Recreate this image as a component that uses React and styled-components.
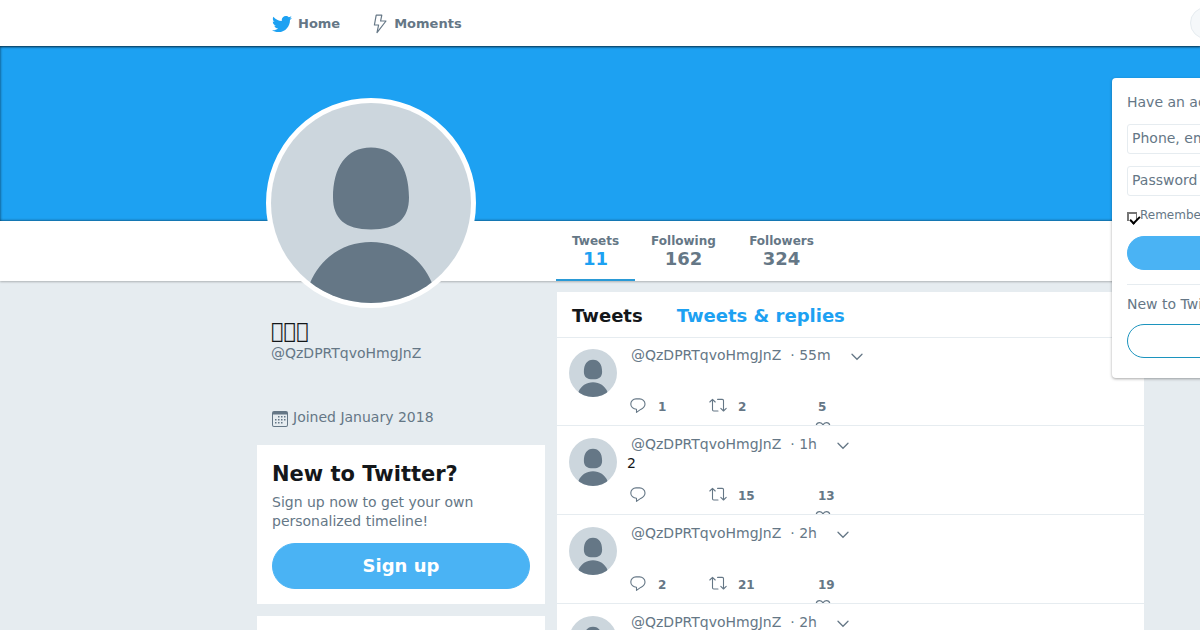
import styled, { createGlobalStyle } from 'styled-components';
import { FaTwitter } from 'react-icons/fa';

const GlobalStyle = createGlobalStyle`
	* {
		box-sizing: border-box;
	}

	body {
		margin: 0;
		background: #e6ecf0;
		color: #14171a;
		font-family: 'DejaVu Sans', Verdana, sans-serif;
		font-size: 14px;
		line-height: 20px;
	}

	h1,
	h2,
	p,
	ul {
		margin: 0;
		padding: 0;
	}

	ul {
		list-style: none;
	}

	a {
		color: inherit;
		text-decoration: none;
	}

	button,
	input {
		font-family: inherit;
	}
`;

// the display name is made of glyphs that the font does not have
const user = {
	name: '\uE83A\uE83B\uE83C',
	login: '@QzDPRTqvoHmgJnZ',
	joined: 'Joined January 2018',
};

const stats = [
	{ label: 'Tweets', value: 11, width: 79, active: true },
	{ label: 'Following', value: 162, width: 97 },
	{ label: 'Followers', value: 324, width: 99 },
];

const tweets = [
	{ id: 1, time: '55m', text: '', replies: 1, retweets: 2, likes: 5 },
	{ id: 2, time: '1h', text: '2', replies: null, retweets: 15, likes: 13 },
	{ id: 3, time: '2h', text: '', replies: 2, retweets: 21, likes: 19 },
	{ id: 4, time: '2h', text: '', replies: null, retweets: null, likes: null },
];

const BoltIcon = () => (
	<svg width="16" height="20" viewBox="0 0 16 20" fill="none" stroke="#657786" strokeWidth="1.2" strokeLinejoin="round">
		<path d="M4.200 1.200h5.600L8.600 7H14L5 18.600 6.600 11H2.400z" />
	</svg>
);

const CalendarIcon = () => (
	<svg width="16" height="16" viewBox="0 0 16 16" fill="#657786">
		<path
			fillRule="evenodd"
			d="M2 0h12a2 2 0 0 1 2 2v12a2 2 0 0 1-2 2H2a2 2 0 0 1-2-2V2a2 2 0 0 1 2-2zM1 3.5V14a1 1 0 0 0 1 1h12a1 1 0 0 0 1-1V3.5z"
		/>
		<path d="M6 5h1.5v1.5H6zM9 5h1.5v1.5H9zM12 5h1.5v1.5H12zM3 8h1.5v1.5H3zM6 8h1.5v1.5H6zM9 8h1.5v1.5H9zM12 8h1.5v1.5H12zM3 11h1.5v1.5H3zM6 11h1.5v1.5H6zM9 11h1.5v1.5H9z" />
	</svg>
);

const ReplyIcon = () => (
	<svg width="16" height="16" viewBox="0 0 16 16" fill="none" stroke="#657786" strokeWidth="1.1" strokeLinejoin="round">
		<path d="M6 .9h3.600a5.400 5 0 0 1 5.400 5c0 2.600-1.700 4.100-4.300 5.500l-4.200 3v-3.200C3.200 11.200.8 9 .8 5.900A5.200 5 0 0 1 6 .9z" />
	</svg>
);

const RetweetIcon = () => (
	<svg width="18" height="16" viewBox="0 0 18 16" fill="none" stroke="#657786" strokeWidth="1.1" strokeLinejoin="round" strokeLinecap="round">
		<path d="M.8 4 3.500 1.400 6.200 4M3.500 1.400v10.400a1.200 1.200 0 0 0 1.200 1.200H9M17.200 10.400 14.500 13l-2.700-2.600M14.500 13V2.600a1.200 1.200 0 0 0-1.200-1.200H8.600" />
	</svg>
);

const HeartIcon = () => (
	<svg width="16" height="16" viewBox="0 0 16 16" fill="none" stroke="#657786" strokeWidth="1.2">
		<path d="M8 14.500C5 12.500 1.200 9 1.200 5.300 1.200 3 2.800 1.600 4.600 1.600 6.200 1.600 7.400 2.600 8 4c.6-1.400 1.800-2.400 3.400-2.400 1.800 0 3.400 1.400 3.400 3.700 0 3.700-3.800 7.200-6.800 9.200z" />
	</svg>
);

const CaretIcon = () => (
	<svg width="12" height="8" viewBox="0 0 12 8" fill="none" stroke="#657786" strokeWidth="1.3" strokeLinecap="round">
		<path d="M1 1.300 6 6.300l5-5" />
	</svg>
);

const AvatarContainer = ({ className }) => (
	<a className={className} href="#profile" aria-label={user.login}>
		<svg viewBox="0 0 200 200">
			<path
				fill="#657786"
				d="M100 44.500c25 0 38 20 38 50 0 21-12 32-38 32s-38-11-38-32c0-30 13-50 38-50zM100 139c27 0 50 15 61 41v20H39v-20c11-26 34-41 61-41z"
			/>
		</svg>
	</a>
);

const Avatar = styled(AvatarContainer)`
	display: block;
	flex: none;
	width: ${({ size }) => size}px;
	height: ${({ size }) => size}px;
	border: ${({ $border = 0 }) => $border}px solid #fff;
	border-radius: 50%;
	background: #fff;

	svg {
		display: block;
		width: 100%;
		border-radius: 50%;
		background: #ccd6dd;
	}
`;

const Page = styled.div`
	position: relative;
	overflow: hidden;
	min-height: 100vh;
`;

const TopBar = styled.header`
	position: relative;
	display: flex;
	align-items: center;
	height: 46px;
	padding-left: 272px;
	background: #fff;
	box-shadow: 0 1px 2px rgba(0, 0, 0, 0.5);
	color: #657786;
	font-size: 13px;
	font-weight: bold;
`;

const TopNav = styled.nav`
	display: flex;
	gap: 32px;
	padding-top: 1px;

	a {
		display: flex;
		align-items: center;
		gap: 6px;
	}
`;

const Search = styled.input`
	width: 220px;
	height: 32px;
	margin: 0 -210px 0 auto;
	padding: 0 16px;
	border: 1px solid #e6ecf0;
	border-radius: 16px;
	background: #f5f8fa;
	font-size: 12px;
`;

const Banner = styled.div`
	height: 175px;
	margin-right: -10px;
	background: #1da1f2;
	box-shadow: inset 0 0 3px rgba(0, 0, 0, 0.7);
`;

const ProfileBar = styled.div`
	position: relative;
	display: flex;
	height: 60px;
	padding-left: 556px;
	background: #fff;
	box-shadow: 0 1px 2px rgba(0, 0, 0, 0.25);
`;

const AvatarHolder = styled.div`
	position: absolute;
	bottom: -27px;
	left: 266px;
`;

const Stats = styled.ul`
	display: flex;
`;

const Stat = styled.li`
	width: ${({ $width }) => $width}px;
	border-bottom: 2px solid ${({ $active }) => ($active ? '#2a9ad6' : 'transparent')};
	color: #657786;
	font-weight: bold;
	text-align: center;

	a {
		display: flex;
		flex-direction: column;
		padding-top: 12px;
		font-size: 12px;
		line-height: 16px;
	}

	strong {
		color: ${({ $active }) => ($active ? '#1da1f2' : 'inherit')};
		font-size: 18px;
		line-height: 20px;
	}
`;

const Content = styled.main`
	display: grid;
	grid-template-columns: 288px 1fr;
	gap: 12px;
	padding: 11px 56px 0 257px;
`;

const Sidebar = styled.aside`
	display: flex;
	flex-direction: column;
	gap: 12px;
`;

const Profile = styled.section`
	height: 141px;
	padding: 27px 14px 0;
	color: #657786;

	h1 {
		color: #14171a;
		font-size: 21px;
		font-weight: normal;
		line-height: 24px;
	}
`;

const Joined = styled.p`
	display: flex;
	align-items: center;
	gap: 5px;
	padding-left: 1px;
	margin-top: 44px;

	svg {
		margin-top: 3px;
	}
`;

const Card = styled.section`
	min-height: ${({ $minHeight = 0 }) => $minHeight}px;
	padding: 15px;
	background: #fff;

	h2 {
		font-size: 21px;
		line-height: 28px;
	}

	p {
		margin: 5px 0 12px;
		color: #657786;
		line-height: 19px;
	}
`;

const Button = styled.button`
	display: block;
	width: 100%;
	height: ${({ $height }) => $height}px;
	padding: 0 0 2px;
	border: 1px solid ${({ $outline }) => ($outline ? '#1c94be' : '#4ab3f4')};
	border-radius: 100px;
	background: ${({ $outline }) => ($outline ? '#fff' : '#4ab3f4')};
	color: ${({ $outline }) => ($outline ? '#1da1f2' : '#fff')};
	font-size: ${({ $fontSize = 14 }) => $fontSize}px;
	font-weight: bold;
`;

const Timeline = styled.section`
	background: #fff;
`;

const Tabs = styled.nav`
	position: relative;
	display: flex;
	align-items: center;
	gap: 34px;
	height: 45px;
	padding: 2px 15px 0;
	box-shadow: 0 1px #e6ecf0;
	font-size: 18px;
	font-weight: bold;

	a {
		color: #1da1f2;
	}
`;

const TweetContainer = ({ className, tweet }) => (
	<li className={className}>
		<Avatar size={48} />
		<div className="body">
			<div className="meta">
				<a href="#profile">{user.login}</a>
				<a className="time" href="#tweet">
					· {tweet.time}
				</a>
				<button aria-label="More">
					<CaretIcon />
				</button>
			</div>
			<p>{tweet.text}</p>
			<div className="actions">
				<button aria-label="Reply">
					<ReplyIcon />
					{tweet.replies}
				</button>
				<button aria-label="Retweet">
					<RetweetIcon />
					{tweet.retweets}
				</button>
				<button className="like" aria-label="Like">
					<span>{tweet.likes}</span>
					<HeartIcon />
				</button>
			</div>
		</div>
	</li>
);

const Tweet = styled(TweetContainer)`
	display: flex;
	gap: 10px;
	height: 89px;
	padding: 11px 12px 0;
	border-bottom: 1px solid #e6ecf0;
	overflow: hidden;

	${Avatar} {
		margin-top: 1px;
	}

	.meta {
		display: flex;
		align-items: center;
		height: 14px;
		padding-left: 4px;
		color: #657786;
	}

	.meta button {
		margin-top: 3px;
	}

	.time {
		margin: 0 20px 0 9px;
	}

	button {
		display: flex;
		padding: 0;
		border: none;
		background: none;
		color: #657786;
		font-size: 12px;
		font-weight: bold;
		line-height: 18px;
	}

	p {
		height: 20px;
		margin-top: 2px;
	}

	.actions {
		display: grid;
		grid-template-columns: 79px 107px 40px;
		align-items: start;
		margin-top: 14px;
		padding-left: 3px;
	}

	.actions button {
		gap: 11px;
	}

	.actions button:first-child {
		gap: 12px;
	}

	.actions .like {
		flex-direction: column;
		align-items: flex-start;
		gap: 5px;
		padding-left: 2px;
	}

	.like span {
		min-height: 18px;
	}

	.like svg {
		margin-left: -3px;
	}
`;

const LoginPanel = styled.form`
	position: absolute;
	top: 78px;
	right: -202px;
	width: 290px;
	padding: 14px 15px 20px;
	border-radius: 4px;
	background: #fff;
	box-shadow: 0 1px 3px rgba(0, 0, 0, 0.35);
	color: #657786;

	hr {
		margin: 14px 0 9px;
		border: none;
		border-top: 1px solid #e6ecf0;
	}

	p + button {
		margin-top: 10px;
	}
`;

const Field = styled.input`
	display: block;
	width: 100%;
	height: 30px;
	margin: 12px 0;
	padding: 0 4px 2px;
	border: 1px solid #e6ecf0;
	border-radius: 3px;
	font-size: 14px;

	&::placeholder {
		color: #657786;
	}
`;

const Remember = styled.label`
	display: flex;
	align-items: center;
	gap: 3px;
	height: 16px;
	margin: -1px 0 13px;
	font-size: 12px;

	input {
		flex: none;
		appearance: none;
		width: 10px;
		height: 9px;
		margin: 3px 0 0;
		border: solid #767676;
		border-width: 2px 1px 0 2px;
	}

	input:checked::after {
		content: '';
		display: block;
		width: 4px;
		height: 8px;
		margin-left: 3px;
		border: solid #000;
		border-width: 0 2px 2px 0;
		transform: rotate(45deg);
	}
`;

const App = () => {
	return (
		<Page>
			<GlobalStyle />
			<TopBar>
				<TopNav>
					<a href="#home">
						<FaTwitter size={20} color="#1da1f2" />
						Home
					</a>
					<a href="#moments">
						<BoltIcon />
						Moments
					</a>
				</TopNav>
				<Search aria-label="Search Twitter" />
			</TopBar>
			<Banner />
			<ProfileBar>
				<Stats>
					{stats.map(({ label, value, width, active }) => (
						<Stat key={label} $width={width} $active={active}>
							<a href={`#${label}`}>
								{label}
								<strong>{value}</strong>
							</a>
						</Stat>
					))}
				</Stats>
				<AvatarHolder>
					<Avatar size={210} $border={5} />
				</AvatarHolder>
			</ProfileBar>
			<Content>
				<Sidebar>
					<Profile>
						<h1>{user.name}</h1>
						<a href="#profile">{user.login}</a>
						<Joined>
							<CalendarIcon />
							{user.joined}
						</Joined>
					</Profile>
					<Card>
						<h2>New to Twitter?</h2>
						<p>Sign up now to get your own personalized timeline!</p>
						<Button $height={46} $fontSize={18}>
							Sign up
						</Button>
					</Card>
					<Card $minHeight={80} />
				</Sidebar>
				<Timeline>
					<Tabs>
						<span>Tweets</span>
						<a href="#replies">Tweets &amp; replies</a>
					</Tabs>
					<ul>
						{tweets.map((tweet) => (
							<Tweet key={tweet.id} tweet={tweet} />
						))}
					</ul>
				</Timeline>
			</Content>
			<LoginPanel>
				<p>Have an account?</p>
				<Field aria-label="Phone, email or username" placeholder="Phone, email or username" />
				<Field type="password" aria-label="Password" placeholder="Password" />
				<Remember>
					<input type="checkbox" defaultChecked />
					Remember me
				</Remember>
				<Button type="button" $height={34}>
					Log in
				</Button>
				<hr />
				<p>New to Twitter?</p>
				<Button type="button" $height={34} $outline>
					Sign up
				</Button>
			</LoginPanel>
		</Page>
	);
};

export default App;
